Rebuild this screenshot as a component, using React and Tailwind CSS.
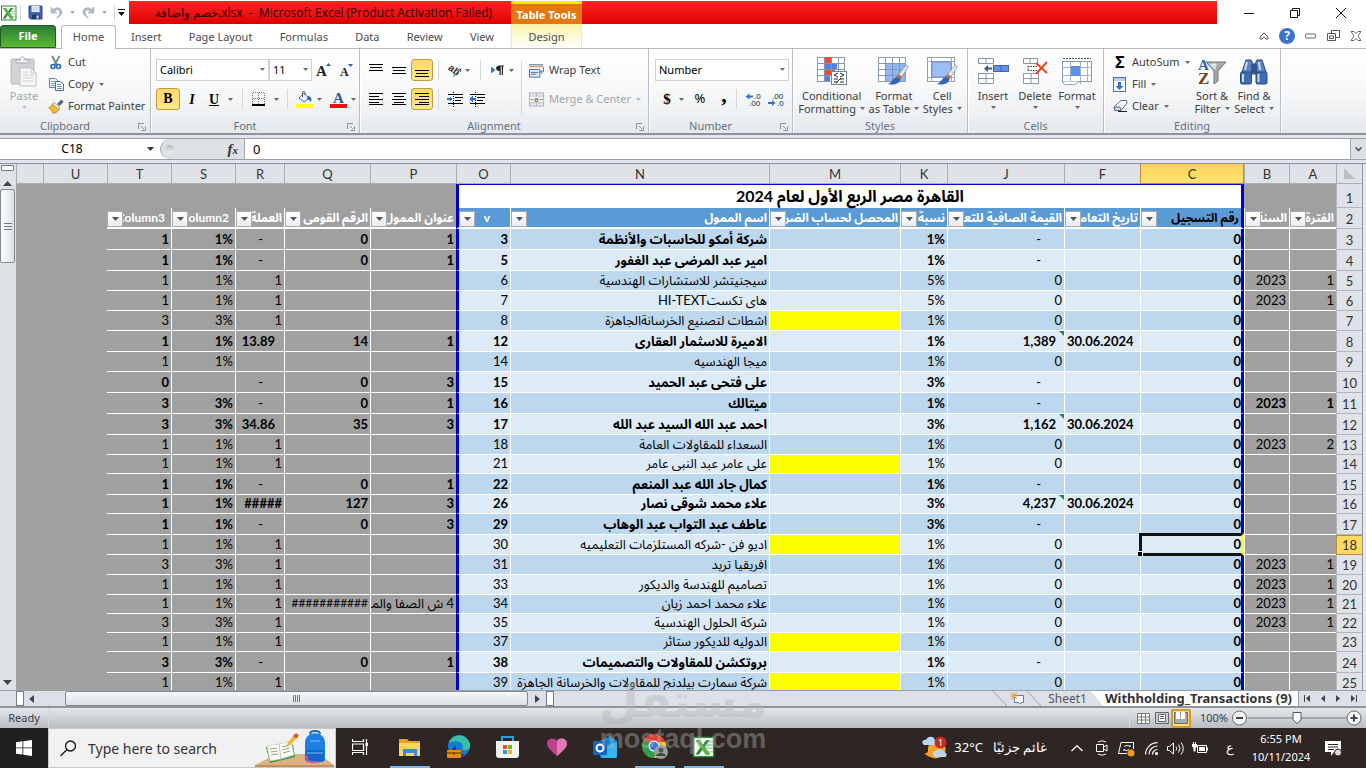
import { useState } from "react";
import clsx from "clsx";

const columns = [
  { id: "A", width: 47, title: "الفترة" },
  { id: "B", width: 45, title: "السنة" },
  { id: "C", width: 104, title: "رقم التسجيل" },
  { id: "F", width: 76, title: "تاريخ التعامل" },
  { id: "J", width: 117, title: "القيمة الصافية للتعامل" },
  { id: "K", width: 47, title: "نسبة" },
  { id: "M", width: 131, title: "المحصل لحساب الضريبة" },
  { id: "N", width: 259, title: "اسم الممول" },
  { id: "O", width: 54, title: "v" },
  { id: "P", width: 86, title: "عنوان الممول" },
  { id: "Q", width: 86, title: "الرقم القومى" },
  { id: "R", width: 49, title: "العملة" },
  { id: "S", width: 64, title: "Column2" },
  { id: "T", width: 64, title: "Column3" },
];

const rows = [
  { n: 3, h: 21, bold: true, C: "0", J: "-", K: "1%", N: "شركة أمكو للحاسبات والأنظمة", O: "3", P: "1", Q: "0", R: "-", S: "1%", T: "1" },
  { n: 4, h: 21, bold: true, C: "0", J: "-", K: "1%", N: "امير عبد المرضى عبد الغفور", O: "5", P: "1", Q: "0", R: "-", S: "1%", T: "1" },
  { n: 5, h: 20, A: "1", B: "2023", C: "0", J: "0", K: "5%", N: "سيجنيتشر للاستشارات الهندسية", O: "6", R: "1", S: "1%", T: "1" },
  { n: 6, h: 20, A: "1", B: "2023", C: "0", J: "0", K: "5%", N: "هاى تكستHI-TEXT", O: "7", R: "1", S: "1%", T: "1" },
  { n: 7, h: 20, due: true, C: "0", J: "0", K: "1%", N: "اشطات لتصنيع الخرسانةالجاهزة", O: "8", R: "1", S: "3%", T: "3" },
  { n: 8, h: 21, bold: true, C: "0", F: "30.06.2024", J: "1,389", K: "1%", N: "الاميرة للاسثمار العقارى", O: "12", P: "1", Q: "14", R: "13.89", S: "1%", T: "1" },
  { n: 9, h: 20, C: "0", J: "0", K: "1%", N: "ميجا الهندسيه", O: "14", S: "1%", T: "1" },
  { n: 10, h: 21, bold: true, C: "0", J: "-", K: "3%", N: "على فتحى عبد الحميد", O: "15", P: "3", Q: "0", R: "-", T: "0" },
  { n: 11, h: 21, bold: true, A: "1", B: "2023", C: "0", J: "-", K: "1%", N: "ميتالك", O: "16", P: "1", Q: "0", R: "-", S: "3%", T: "3" },
  { n: 12, h: 21, bold: true, C: "0", F: "30.06.2024", J: "1,162", K: "3%", N: "احمد عبد الله السيد عبد الله", O: "17", P: "3", Q: "35", R: "34.86", S: "3%", T: "3" },
  { n: 13, h: 20, A: "2", B: "2023", C: "0", J: "0", K: "1%", N: "السعداء للمقاولات العامة", O: "18", R: "1", S: "1%", T: "1" },
  { n: 14, h: 19, due: true, C: "0", J: "0", K: "1%", N: "على عامر عبد النبى عامر", O: "21", R: "1", S: "1%", T: "1" },
  { n: 15, h: 21, bold: true, C: "0", J: "-", K: "1%", N: "كمال جاد الله عبد المنعم", O: "22", P: "1", Q: "0", R: "-", S: "1%", T: "1" },
  { n: 16, h: 19, bold: true, C: "0", F: "30.06.2024", J: "4,237", K: "3%", N: "علاء محمد شوقى نصار", O: "26", P: "3", Q: "127", R: "#####", S: "1%", T: "1" },
  { n: 17, h: 21, bold: true, C: "0", J: "-", K: "3%", N: "عاطف عبد التواب عبد الوهاب", O: "29", P: "3", Q: "0", R: "-", S: "1%", T: "1" },
  { n: 18, h: 20, due: true, C: "0", J: "0", K: "1%", N: "اديو فن -شركه المستلزمات التعليميه", O: "30", R: "1", S: "1%", T: "1" },
  { n: 19, h: 20, A: "1", B: "2023", C: "0", J: "0", K: "1%", N: "افريقيا تريد", O: "31", R: "1", S: "3%", T: "3" },
  { n: 20, h: 20, A: "1", B: "2023", C: "0", J: "0", K: "1%", N: "تصاميم للهندسة والديكور", O: "33", R: "1", S: "1%", T: "1" },
  { n: 21, h: 19, A: "1", B: "2023", C: "0", J: "0", K: "1%", N: "علاء محمد احمد زيان", O: "34", P: "4 ش الصفا والمروة", Q: "###########", R: "1", S: "1%", T: "1" },
  { n: 22, h: 19, A: "1", B: "2023", C: "0", J: "0", K: "1%", N: "شركة الحلول الهندسية", O: "35", R: "1", S: "3%", T: "3" },
  { n: 23, h: 19, due: true, C: "0", J: "0", K: "1%", N: "الدوليه للديكور ستائر", O: "37", R: "1", S: "1%", T: "1" },
  { n: 24, h: 21, bold: true, C: "0", J: "-", K: "1%", N: "بروتكشن للمقاولات والتصميمات", O: "38", P: "1", Q: "0", R: "-", S: "3%", T: "3" },
  { n: 25, h: 20, due: true, C: "0", J: "0", K: "1%", N: "شركة سمارت بيلدنج للمقاولات والخرسانة الجاهزة", O: "39", R: "1", S: "1%", T: "1" },
];

const inPrintArea = (id) => "CFJKMNO".includes(id);

/* ---------- small pieces ---------- */

function Arrow({ className }) {
  return (
    <svg width="5" height="3" viewBox="0 0 5 3" className={clsx("shrink-0", className)}>
      <path d="M0 0h5L2.5 3z" fill="currentColor" />
    </svg>
  );
}

function Sep({ className }) {
  return <span className={clsx("w-px shrink-0 bg-[#d3d6da]", className)} />;
}

function Lines({ rows: spec, selected, label }) {
  return (
    <button
      aria-label={label}
      className={clsx(
        "flex h-[22px] w-[22px] items-center justify-center rounded-[3px] border",
        selected ? "border-[#c29b3b] bg-gradient-to-b from-[#fdd573] to-[#ffe78a]" : "border-transparent"
      )}
    >
      <svg width="14" height="16" viewBox="0 0 14 16" shapeRendering="crispEdges">
        {spec.map(([x, y, w]) => (
          <rect key={y} x={x} y={y} width={w} height="1" fill="#000" />
        ))}
      </svg>
    </button>
  );
}

function Group({ title, width, launcher, children }) {
  return (
    <section className={clsx("flex h-full shrink-0 flex-col border-r border-[#b9bec5] shadow-[1px_0_0_#fff]", width)}>
      <div className="flex h-[70px] px-1 pt-[2px]">{children}</div>
      <div className={clsx("relative text-center text-[11px] leading-[14px] text-[#66707e]", launcher && "pr-5")}>
        {title}
        {launcher && (
          <svg className="absolute right-1 top-1" width="8" height="8" viewBox="0 0 8 8" fill="none" stroke="#8a919b">
            <path d="M.5 6V.5H6M3 3l3 3M7.500 3.500v4h-4" />
          </svg>
        )}
      </div>
    </section>
  );
}

function SmallButton({ icon, children, arrow, disabled }) {
  return (
    <button className={clsx("flex h-[22px] items-center gap-1 whitespace-nowrap", disabled && "text-[#a3a6aa]")}>
      <span className="flex w-4 justify-center">{icon}</span>
      {children}
      {arrow && <Arrow className={clsx("ml-px", disabled ? "text-[#b5b8bc]" : "text-[#66696e]")} />}
    </button>
  );
}

function BigButton({ icon, lines, arrowBelow, disabled, width }) {
  return (
    <button
      className={clsx(
        "flex flex-col items-center whitespace-nowrap pt-[2px] leading-[13px]",
        width,
        disabled && "text-[#a3a6aa]"
      )}
    >
      <span className="flex h-9 items-center">{icon}</span>
      <span>{lines[0]}</span>
      {lines[1] && (
        <span className="flex items-center gap-1">
          {lines[1]}
          <Arrow className="text-[#66696e]" />
        </span>
      )}
      {arrowBelow && <Arrow className={clsx("mt-1", disabled ? "text-[#c0c3c7]" : "text-[#66696e]")} />}
    </button>
  );
}

function Combo({ label, value, width }) {
  return (
    <span className={clsx("relative flex h-[22px]", width)}>
      <select
        aria-label={label}
        defaultValue={value}
        className="w-full appearance-none border border-[#cdd1d6] bg-white px-[3px] text-[11px] text-black"
      >
        <option>{value}</option>
      </select>
      <Arrow className="pointer-events-none absolute right-1 top-[9px] text-[#66696e]" />
    </span>
  );
}

/* ---------- icons ---------- */

function ExcelIcon({ size = 16 }) {
  return (
    <svg width={size} height={size} viewBox="0 0 16 16">
      <rect x=".5" y="1" width="14.500" height="14" fill="#f4faf2" stroke="#2f8a3b" />
      <path d="M10 4h4.500M10 6.500h4.500M10 9h4.500M10 11.500h4.500" stroke="#9dcf9f" />
      <path d="M2 3h3l2 3.500L9.500 3H12L8.500 8l4 5.500H9.200L6.800 10l-2.300 3.500H1.800L5.500 8z" fill="#2f8a3b" />
      <path d="M2 3h3l7.500 10.500H9.200z" fill="#62b147" />
    </svg>
  );
}

function SaveIcon() {
  return (
    <svg width="15" height="15" viewBox="0 0 15 15">
      <path d="M1 1h13v13H2.500L1 12.500z" fill="#4163b8" stroke="#2c4890" />
      <rect x="3.500" y="1" width="8" height="6" fill="#eef4fc" />
      <path d="M4.500 3h6M4.500 5h6" stroke="#a7bfe4" />
      <rect x="4" y="9.500" width="7.500" height="4.500" fill="#22345e" />
      <rect x="8.500" y="10.500" width="2" height="3" fill="#dfe8f5" />
    </svg>
  );
}

function UndoIcon({ flip }) {
  return (
    <svg width="13" height="13" viewBox="0 0 13 13" className={flip && "-scale-x-100"}>
      <path d="M1 1v6h6L4.800 5C7 2.800 10 4 9.700 7c-.2 2-1.500 3.600-3.200 5.300C10 10.500 12 8.700 12 6 12 1.800 6.500.2 3.200 3.400z" fill="#b4b9c2" stroke="#9ba1ac" strokeWidth=".5" />
    </svg>
  );
}

function PasteIcon() {
  return (
    <svg width="28" height="31" viewBox="0 0 28 31">
      <rect x="1" y="3" width="23" height="25" rx="1.500" fill="#d1d3d6" stroke="#b4b6ba" />
      <path d="M6 7V4h4c0-4 5-4 5 0h4v3z" fill="#f0f1f2" stroke="#a7aaae" />
      <path d="M10 12h11l5 5v13H10z" fill="#f8f8f9" stroke="#bcbfc3" />
      <path d="M21 12v5h5M12.500 16h6M12.500 19h11M12.500 22h11M12.500 25h11" fill="none" stroke="#cbced2" />
    </svg>
  );
}

function CutIcon() {
  return (
    <svg width="12" height="15" viewBox="0 0 12 15" fill="none">
      <path d="M2 1l5 9M9.500 1L4.500 10" stroke="#6e7a8e" strokeWidth="1.600" />
      <circle cx="3" cy="11.500" r="2" stroke="#2c63b5" strokeWidth="1.600" />
      <circle cx="8.500" cy="11.500" r="2" stroke="#2c63b5" strokeWidth="1.600" />
    </svg>
  );
}

function CopyIcon() {
  return (
    <svg width="15" height="13" viewBox="0 0 15 13">
      <path d="M.5.5h6l2 2v7h-8z" fill="#eaf1fb" stroke="#5d83bb" />
      <path d="M2 3.500h4M2 5.500h5M2 7.500h4" stroke="#7fa3d8" />
      <path d="M6.500 3.500h5l3 2.500v6.500h-8z" fill="#fff" stroke="#3f6cae" />
      <path d="M8 6.500h4M8 8.500h5M8 10.500h5" stroke="#6c95d2" />
    </svg>
  );
}

function BrushIcon() {
  return (
    <svg width="16" height="15" viewBox="0 0 16 15">
      <path d="M9 5l4.500-4.500L15.500 3 11.500 7z" fill="#56627a" />
      <path d="M6 3.500L12 9l-1.500 1.500L4.500 5.500z" fill="#fff" stroke="#6b7280" strokeWidth=".7" />
      <path d="M4.500 5L11 10.500c-1 2-3 3.500-6 4C4 12 2.500 10 .5 8.500 2 8.200 3.500 7 4.500 5z" fill="#f2b63c" stroke="#b47a17" strokeWidth=".7" />
    </svg>
  );
}

function GrowFont({ small }) {
  return (
    <svg width="15" height="16" viewBox="0 0 15 16">
      <text x={small ? 1 : 0} y="14" fontSize={small ? 12 : 15} fontWeight="bold" fontFamily="Liberation Serif, serif" fill="#222">A</text>
      <path d={small ? "M9 2h5l-2.500 3z" : "M10 4h5l-2.500-3z"} fill="#2c5fae" />
    </svg>
  );
}

function BordersIcon() {
  return (
    <svg width="14" height="14" viewBox="0 0 14 14" shapeRendering="crispEdges">
      <path d="M.5.500h12M.5 6.500h12M.5.500v12M6.500.500v12M12.500.500v12" fill="none" stroke="#777" strokeDasharray="1 1" />
      <path d="M0 13h13" stroke="#000" strokeWidth="2" />
    </svg>
  );
}

function FillColor() {
  return (
    <svg width="17" height="17" viewBox="0 0 17 17">
      <path d="M3 7l5-5 5 5-5 4z" fill="#e7effa" stroke="#55719d" />
      <path d="M6.500 6V1.500c0-1.500 2.500-1.500 2.500 0V4" fill="none" stroke="#555" />
      <path d="M12 5c3 .5 4 3 3 6-1-1-2-2.500-4-3z" fill="#2e62b6" />
      <rect x="0" y="13" width="17" height="4" fill="#ff0" />
    </svg>
  );
}

function FontColor() {
  return (
    <svg width="17" height="17" viewBox="0 0 17 17">
      <text x="3" y="12" fontSize="15" fontWeight="bold" fontFamily="Liberation Serif, serif" fill="#31569c">A</text>
      <rect x="0" y="13" width="17" height="4" fill="#f00e0e" />
    </svg>
  );
}

function OrientIcon() {
  return (
    <svg width="16" height="16" viewBox="0 0 16 16">
      <text x="1" y="10" fontSize="10" fontWeight="bold" fontFamily="Liberation Sans, sans-serif" fill="#333" transform="rotate(38 5 8)">ab</text>
      <path d="M6 14.500L14 7M14 7l-3 .5M14 7l-.5 3" stroke="#555" fill="none" />
    </svg>
  );
}

function DirectionIcon() {
  return (
    <svg width="13" height="11" viewBox="0 0 13 11">
      <path d="M0 1.500l4.500 3.500L0 8.500z" fill="#3474cc" />
      <path d="M8.500 6C4 6 4 .5 8.500.500H13v1h-1V10h-1.200V1.500H9.700V10H8.500z" fill="#222" />
    </svg>
  );
}

function IndentIcon({ out }) {
  return (
    <svg width="17" height="15" viewBox="0 0 17 15" shapeRendering="crispEdges">
      <path d="M1 2.500h15M8 5.500h8M8 8.500h6M1 11.500h15" stroke="#000" />
      <path d="M6.500 0v15" stroke="#000" strokeDasharray="1 1" />
      <path d={out ? "M0 7l4-3v2h3v2H4v2z" : "M6 7L2.500 4v2H0v2h2.500v2z"} fill="#2a6bd0" />
    </svg>
  );
}

function WrapIcon() {
  return (
    <svg width="17" height="15" viewBox="0 0 17 15">
      <path d="M0 1.500h15" stroke="#3c5c8c" />
      <path d="M0 3.500h15" stroke="#c77b3b" />
      <rect x=".5" y="6.500" width="11" height="8" fill="#e8f0fb" stroke="#4a6796" />
      <path d="M2 9.500h8M2 11.500h6" stroke="#3b6ebd" />
      <path d="M15.500 4v5h-3m1.500-2l-2 2 2 2" fill="none" stroke="#3b6ebd" />
    </svg>
  );
}

function MergeIcon() {
  return (
    <svg width="17" height="15" viewBox="0 0 17 15">
      <rect x=".5" y=".5" width="15" height="14" fill="#e6e7e9" stroke="#aeb1b5" />
      <path d="M.5 4h15M.5 11h15M8 .5V4M8 11v3.500" stroke="#aeb1b5" />
      <rect x="1" y="4.500" width="14" height="6" fill="#f7f7f8" />
      <path d="M1.500 7.500H5M11 7.500h4" stroke="#888" />
      <text x="5.500" y="10" fontSize="8" fontWeight="bold" fontFamily="Liberation Sans, sans-serif" fill="#777">a</text>
    </svg>
  );
}

function DecimalIcon({ down }) {
  return (
    <svg width="17" height="15" viewBox="0 0 17 15" fontFamily="Liberation Sans, sans-serif" fontSize="8" fill="#222">
      <text x={down ? 4 : 9} y="7">{down ? ".00" : ".0"}</text>
      <text x={down ? 9 : 4} y="14">{down ? ".0" : ".00"}</text>
      <path d={down ? "M0 10h4V8l3.500 3L4 14v-2H0z" : "M8 3.500H4.500v-2L.5 4.500l4 3v-2H8z"} fill="#3470cc" />
    </svg>
  );
}

function GridBase({ fill }) {
  return (
    <>
      <rect x=".5" y=".5" width="27" height="24" fill="#fff" stroke="#8e9bb0" />
      {fill}
      <path d="M.5 6.500h27M.5 12.500h27M.5 18.500h27M7.500.500v24M14.500.500v24M21.500.500v24" stroke="#8496b8" />
    </>
  );
}

function PaintBrush() {
  return (
    <>
      <path d="M20 18L28 8l2.500 1.500L24 20z" fill="#e4e6ea" stroke="#81868e" strokeWidth=".7" />
      <path d="M18 20l3-3 3 3-2 3z" fill="#b57634" />
      <path d="M19 20c-5 1-4 5-9 7 5 1.500 12 0 12.500-5z" fill="#3567b8" />
    </>
  );
}

function ConditionalIcon() {
  return (
    <svg width="30" height="29" viewBox="0 0 30 29">
      <GridBase
        fill={
          <>
            <path d="M7 0h7v6H7zM7 12h11v6H7z" fill="#e2512b" />
            <path d="M7 6h13v6H7zM7 18h6v6H7z" fill="#4f80e4" />
          </>
        }
      />
      <rect x="14.500" y="14.500" width="15" height="13" fill="#fff" stroke="#70819d" />
      <path d="M21 16l-4 2 4 2M17 22h4M17 25h4M23 16l4 2-4 2M23 22h4M23 25h4M24 21l-5 5" fill="none" stroke="#222" />
    </svg>
  );
}

function FormatTableIcon() {
  return (
    <svg width="31" height="29" viewBox="0 0 31 29">
      <GridBase fill={<rect x="7" y="6" width="20" height="18" fill="#8fb6f2" />} />
      <PaintBrush />
    </svg>
  );
}

function CellStylesIcon() {
  return (
    <svg width="31" height="29" viewBox="0 0 31 29">
      <rect x=".5" y=".5" width="27" height="24" fill="#fff" stroke="#8e9bb0" />
      <path d="M.5 4.500h27M.5 20.500h27M4.500.500v24M24.500.500v24" stroke="#9aa9c4" />
      <rect x="5" y="5" width="19" height="15" fill="#9dbff5" stroke="#5c8ce0" />
      <PaintBrush />
    </svg>
  );
}

function InsertCells() {
  return (
    <svg width="31" height="28" viewBox="0 0 31 28">
      <path d="M.5 1.500h15v5h-15zM8 1.500v5M.5 16.500h15v10h-15zM8 16.500v10M.5 21.500h15" fill="#fff" stroke="#8b96a8" />
      <rect x="15.500" y="8.500" width="15" height="6" fill="#5f92e8" stroke="#3f66b0" />
      <path d="M23 9v6" stroke="#3f66b0" />
      <path d="M6 11.500l4-3.500v2.500h4v2h-4V15z" fill="#39588c" />
    </svg>
  );
}

function DeleteCells() {
  return (
    <svg width="26" height="28" viewBox="0 0 26 28">
      <path d="M1.500 1.500h14v5h-14zM8 1.500v5M1.500 16.500h15v10h-15zM9 16.500v10M1.500 21.500h15" fill="#fff" stroke="#8b96a8" />
      <path d="M6 9.500h9M6 13.500h9M6 9v5" stroke="#444" strokeDasharray="1.500 1" />
      <path d="M14 6l11 10M25 5L14 17" stroke="#e04a1c" strokeWidth="2" />
    </svg>
  );
}

function FormatCells() {
  return (
    <svg width="31" height="30" viewBox="0 0 31 30">
      <path d="M1 2.500h28" stroke="#555" strokeDasharray="2 1" />
      <rect x=".5" y="5.500" width="29" height="20" fill="#fff" stroke="#8b96a8" />
      <path d="M.5 11.500h29M.5 19.500h29M8.500 5.500v23M18.500 5.500v23M25.500 5.500v20" stroke="#9eb0cf" />
      <rect x="9" y="10" width="9" height="10" fill="#5c8fe8" />
      <path d="M1 25.500c0 4 4 3 7 3s6 1 8-3" fill="#fff" stroke="#8b96a8" />
    </svg>
  );
}

function FillIcon() {
  return (
    <svg width="14" height="15" viewBox="0 0 14 15">
      <rect x=".5" y=".5" width="12" height="14" fill="#fff" stroke="#4a72b0" />
      <rect x="1" y="1" width="11" height="3" fill="#b7cff0" />
      <path d="M5 5h3v4h2.500l-4 4-4-4H5z" fill="#2f6fd0" />
    </svg>
  );
}

function EraserIcon() {
  return (
    <svg width="15" height="12" viewBox="0 0 15 12">
      <path d="M1 7l7-6.500h5.500L14 3 8 10.500H2z" fill="#f4f6fa" stroke="#5a6a85" />
      <path d="M1 7h6l1 3.500H2z" fill="#cbd9ef" stroke="#5a6a85" />
      <path d="M5 11.500h9" stroke="#222" />
    </svg>
  );
}

function SortIcon() {
  return (
    <svg width="30" height="29" viewBox="0 0 30 29">
      <path d="M9 5h20l-8 9v10l-4 3V14z" fill="#a4a8ad" stroke="#73777d" />
      <path d="M12 6.500h8l-2 7z" fill="#dfe1e4" />
      <text x="1" y="13" fontSize="15" fontWeight="bold" fontFamily="Liberation Serif, serif" fill="#2f64b4">A</text>
      <text x="1" y="27" fontSize="17" fontWeight="bold" fontFamily="Liberation Serif, serif" fill="#7b3f1e">Z</text>
    </svg>
  );
}

function FindIcon() {
  return (
    <svg width="28" height="27" viewBox="0 0 28 27">
      <path d="M6 2h5l2 4h2l2-4h5l4 12v2H2v-2z" fill="#5a82bd" stroke="#29487e" />
      <path d="M11 6h6v9h-6z" fill="#33548c" />
      <rect x=".5" y="14" width="11" height="12" rx="1.500" fill="#3d6cb0" stroke="#29487e" />
      <rect x="16" y="14" width="11" height="12" rx="1.500" fill="#3d6cb0" stroke="#29487e" />
      <path d="M3 16v8M18.500 16v8M7 4L5 12M19 4l1 8" stroke="#c6dbf5" strokeWidth="2" />
    </svg>
  );
}

/* ---------- title bar and tabs ---------- */

function TitleBar() {
  return (
    <header className="flex h-6 shrink-0 bg-white pt-px">
      <div className="flex w-[129px] shrink-0 items-center gap-[7px] pl-px text-[#a3a8b0]">
        <ExcelIcon />
        <div className="-ml-1 flex items-center gap-[7px]">
          <Sep className="h-4" />
          <button aria-label="Save"><SaveIcon /></button>
          <button aria-label="Undo"><UndoIcon /></button>
          <Arrow />
          <button aria-label="Redo"><UndoIcon flip /></button>
          <Arrow />
          <Sep className="h-4 bg-[#8a8f96]" />
          <svg width="8" height="8" viewBox="0 0 8 8" className="-ml-1">
            <path d="M0 .5h7M1 3.500h5L3.500 6.500z" fill="#111" stroke="#111" />
          </svg>
        </div>
      </div>
      <div className="flex min-w-0 flex-1 bg-gradient-to-b from-[#ff2222] to-[#dd0000]">
        <h1 className="w-[382px] shrink-0 whitespace-pre pl-[26px] font-['Open_Sans','Noto_Sans',sans-serif] text-[12px] leading-6 text-[#2b0505]">
          <bdi>خصم واضافة</bdi>.xlsx&nbsp; -&nbsp; Microsoft Excel (Product Activation Failed)
        </h1>
        <div className="w-[71px] shrink-0 whitespace-nowrap border-t-[3px] border-[#fbe31d] bg-[#e2780f] text-center text-[11px] font-bold leading-[22px] text-white">
          Table Tools
        </div>
      </div>
      <div className="flex w-[149px] shrink-0 items-center justify-end gap-9 pr-5">
        <button aria-label="Minimize">
          <svg width="10" height="10" viewBox="0 0 10 10"><path d="M0 5.500h10" stroke="#111" /></svg>
        </button>
        <button aria-label="Restore">
          <svg width="10" height="10" viewBox="0 0 10 10" fill="none" stroke="#111"><path d="M.5 2.500h7v7h-7zM2.500 2.500v-2h7v7h-2" /></svg>
        </button>
        <button aria-label="Close">
          <svg width="10" height="10" viewBox="0 0 10 10" stroke="#111"><path d="M0 0l10 10M10 0L0 10" /></svg>
        </button>
      </div>
    </header>
  );
}

function TabRow() {
  const tabs = ["Insert", "Page Layout", "Formulas", "Data", "Review", "View"];
  return (
    <nav className="flex h-[25px] shrink-0 items-stretch border-b border-[#b6babf] bg-white text-[11px] text-[#4a4d52]">
      <button className="mt-px w-14 rounded-t-[3px] border border-[#1d5c2a] bg-gradient-to-b from-[#2b7d36] to-[#5cb82f] font-bold text-white">
        File
      </button>
      <button className="relative -mb-px ml-[5px] mt-px w-[55px] rounded-t-[3px] border border-b-0 border-[#b6babf] bg-white">
        Home
      </button>
      <div className="flex w-[395px] justify-between pl-[15px] pr-[17px] pt-[2px]">
        {tabs.map((t) => (
          <button key={t} className="whitespace-nowrap">{t}</button>
        ))}
      </div>
      <button className="w-[71px] border-x border-[#f2e9b8] bg-gradient-to-b from-[#fcf3a8] to-white pt-[2px]">Design</button>
      <div className="ml-auto flex items-center gap-[10px] pr-1">
        <svg width="10" height="8" viewBox="0 0 10 8" fill="none" stroke="#555"><path d="M5 1l4 4v2H7L5 5 3 7H1V5z" /></svg>
        <button aria-label="Help" className="flex h-4 w-4 items-center justify-center rounded-full bg-[#3c74cc] text-[12px] font-bold text-white">
          ?
        </button>
        <svg width="12" height="6" viewBox="0 0 12 6"><rect x=".5" y="1" width="10" height="4" rx="1" fill="none" stroke="#666" /></svg>
        <svg width="13" height="12" viewBox="0 0 13 12" fill="none" stroke="#555"><path d="M4.500 3V.5h8v7H9M.5 3.500h8v7h-8zM2.500 6h4v2.500h-4z" /></svg>
        <svg width="12" height="10" viewBox="0 0 12 10" fill="none" stroke="#666"><path d="M1 .5h3l2 2 2-2h3L8 5l3 4.500H8l-2-2-2 2H1L4 5z" /></svg>
      </div>
    </nav>
  );
}

/* ---------- ribbon ---------- */

function Ribbon() {
  return (
    <div className="flex h-[86px] shrink-0 overflow-hidden border-b-2 border-[#8e949c] bg-gradient-to-b from-white via-[#f7f8f9] to-[#e6e9ed] text-[11px] text-[#3b3e43]">
      <Group title="Clipboard" width="w-[151px]" launcher>
        <div className="-ml-1 flex">
          <BigButton icon={<PasteIcon />} lines={["Paste"]} arrowBelow disabled width="w-12" />
          <div className="flex flex-col">
            <SmallButton icon={<CutIcon />}>Cut</SmallButton>
            <SmallButton icon={<CopyIcon />} arrow>Copy</SmallButton>
            <SmallButton icon={<BrushIcon />}>Format Painter</SmallButton>
          </div>
        </div>
      </Group>

      <Group title="Font" width="w-[209px]" launcher>
        <div className="flex flex-col gap-[7px] pl-px pt-2">
          <div className="flex items-center">
            <Combo label="Font" value="Calibri" width="w-[113px]" />
            <Combo label="Font size" value="11" width="w-[43px]" />
            <button className="ml-1" aria-label="Increase font size"><GrowFont /></button>
            <button className="ml-2" aria-label="Decrease font size"><GrowFont small /></button>
          </div>
          <div className="flex h-[22px] items-center text-black">
            <button className="h-[22px] w-6 rounded-[3px] border border-[#c29b3b] bg-gradient-to-b from-[#fdd573] to-[#ffe78a] font-['Liberation_Serif'] text-[14px] font-bold leading-5">B</button>
            <button className="w-6 font-['Liberation_Serif'] text-[14px] font-bold italic">I</button>
            <button className="w-5 font-['Liberation_Serif'] text-[14px] font-bold underline">U</button>
            <Arrow className="ml-1 text-[#66696e]" />
            <Sep className="mx-[9px] h-5" />
            <BordersIcon />
            <Arrow className="ml-2 text-[#66696e]" />
            <Sep className="mx-2 h-5" />
            <FillColor />
            <Arrow className="mx-1 text-[#66696e]" />
            <span className="ml-1"><FontColor /></span>
            <Arrow className="ml-1 text-[#66696e]" />
          </div>
        </div>
      </Group>

      <Group title="Alignment" width="w-[289px]" launcher>
        <div className="flex flex-col gap-[7px] pl-px pt-2">
          <div className="flex h-[22px] items-center gap-px">
            <Lines label="Top align" rows={[[0, 2, 14], [1, 5, 12], [0, 8, 14]]} />
            <Lines label="Middle align" rows={[[0, 5, 14], [1, 8, 12], [0, 11, 14]]} />
            <Lines label="Bottom align" rows={[[0, 8, 14], [1, 11, 12], [0, 14, 14]]} selected />
            <Sep className="ml-1 mr-[7px] h-5" />
            <OrientIcon />
            <Arrow className="ml-px text-[#66696e]" />
            <Sep className="mx-[9px] h-5" />
            <DirectionIcon />
            <Arrow className="ml-1 text-[#66696e]" />
          </div>
          <div className="flex h-[22px] items-center gap-px">
            <Lines label="Align left" rows={[[0, 2, 14], [0, 5, 10], [0, 8, 14], [0, 11, 10], [0, 13, 14]]} />
            <Lines label="Center" rows={[[0, 2, 14], [2, 5, 10], [0, 8, 14], [2, 11, 10], [0, 13, 14]]} />
            <Lines label="Align right" rows={[[0, 2, 14], [4, 5, 10], [0, 8, 14], [4, 11, 10], [0, 13, 14]]} selected />
            <Sep className="ml-1 mr-[7px] h-5" />
            <IndentIcon />
            <span className="ml-1"><IndentIcon out /></span>
          </div>
        </div>
        <Sep className="ml-auto mt-[10px] h-[54px]" />
        <div className="flex w-[122px] shrink-0 flex-col gap-[7px] pl-[7px] pt-2">
          <SmallButton icon={<WrapIcon />}>Wrap Text</SmallButton>
          <SmallButton icon={<MergeIcon />} arrow disabled>Merge &amp; Center</SmallButton>
        </div>
      </Group>

      <Group title="Number" width="w-[144px]" launcher>
        <div className="flex shrink-0 flex-col gap-[7px] pl-[2px] pt-2">
          <Combo label="Number format" value="Number" width="w-[134px]" />
          <div className="flex h-[22px] items-center text-black">
            <button className="w-6 font-['Liberation_Serif'] text-[15px] font-bold">$</button>
            <Arrow className="text-[#66696e]" />
            <button className="ml-1 w-6 text-[13px]">%</button>
            <button className="w-6 pb-2 font-['Liberation_Serif'] text-[22px] font-bold leading-3">,</button>
            <Sep className="mr-2 h-5" />
            <DecimalIcon />
            <span className="ml-[6px]"><DecimalIcon down /></span>
          </div>
        </div>
      </Group>

      <Group title="Styles" width="w-[175px]">
        <BigButton icon={<ConditionalIcon />} lines={["Conditional", "Formatting"]} width="w-[70px]" />
        <BigButton icon={<FormatTableIcon />} lines={["Format", "as Table"]} width="w-14" />
        <BigButton icon={<CellStylesIcon />} lines={["Cell", "Styles"]} width="w-[42px]" />
      </Group>

      <Group title="Cells" width="w-[136px]">
        <BigButton icon={<InsertCells />} lines={["Insert"]} arrowBelow width="w-[42px]" />
        <BigButton icon={<DeleteCells />} lines={["Delete"]} arrowBelow width="w-[42px]" />
        <BigButton icon={<FormatCells />} lines={["Format"]} arrowBelow width="w-[42px]" />
      </Group>

      <Group title="Editing" width="w-[177px]">
        <div className="flex w-[83px] flex-col pl-1">
          <SmallButton icon={<span className="text-[16px] font-bold text-black">Σ</span>} arrow>AutoSum</SmallButton>
          <SmallButton icon={<FillIcon />} arrow>Fill</SmallButton>
          <SmallButton icon={<EraserIcon />} arrow>Clear</SmallButton>
        </div>
        <BigButton icon={<SortIcon />} lines={["Sort &", "Filter"]} width="w-[42px]" />
        <BigButton icon={<FindIcon />} lines={["Find &", "Select"]} width="w-[42px]" />
      </Group>
    </div>
  );
}

function FormulaBar() {
  const [value, setValue] = useState("0");
  return (
    <div className="shrink-0 border-b border-[#8f949c] bg-[#e2e3ec] pb-[3px] pt-[3px]">
      <div className="flex h-[22px] border-y border-[#9b9fa6] bg-white">
        <div className="relative flex w-40">
          <input
            aria-label="Name box"
            defaultValue="C18"
            className="w-full bg-transparent pr-4 text-center text-[12px] leading-5 text-black outline-none"
          />
          <svg width="7" height="4" viewBox="0 0 7 4" className="absolute right-[6px] top-2">
            <path d="M0 0h7L3.500 4z" fill="#333" />
          </svg>
        </div>
        <div className="flex w-[85px] items-center justify-between rounded-l-full border-r border-l border-[#a2a6ad] bg-[#dde0e5] pl-[5px] pr-[6px]">
          <span className="h-2 w-2 rounded-full bg-gradient-to-b from-[#b3b7bd] to-[#f2f3f5]" />
          <span className="font-['Liberation_Serif'] text-[15px] font-bold italic text-[#333]">
            f<span className="text-[11px]">x</span>
          </span>
        </div>
        <input
          aria-label="Formula"
          value={value}
          onChange={(e) => setValue(e.target.value)}
          className="min-w-0 flex-1 px-2 text-[13px] leading-5 text-black outline-none"
        />
        <button aria-label="Expand formula bar" className="flex w-4 items-center justify-center border-l border-[#a2a6ad] bg-[#dde0e5]">
          <svg width="7" height="5" viewBox="0 0 7 5" fill="none" stroke="#444" strokeWidth="1.500"><path d="M.5.5l3 3 3-3" /></svg>
        </button>
      </div>
    </div>
  );
}

/* ---------- worksheet ---------- */

function FilterButton({ title }) {
  return (
    <button
      aria-label={`Filter ${title}`}
      className="flex h-4 w-4 shrink-0 items-center justify-center border border-[#a5abb3] bg-gradient-to-b from-white to-[#e9ecf0]"
    >
      <svg width="7" height="4" viewBox="0 0 7 4"><path d="M0 0h7L3.500 4z" fill="#555" /></svg>
    </button>
  );
}

function Cell({ row, id }) {
  const value = row[id];
  const printed = inPrintArea(id);
  const active = id === "C" && row.n === 18;
  const dash = value === "-";
  return (
    <td
      className={clsx(
        "relative border-b border-b-white p-0 align-bottom",
        id !== "T" && id !== "O" && "border-l border-l-white",
        id === "O" && "border-l-[3px] border-l-[#0000cc]",
        id === "C" && "border-r-[3px] border-r-[#0000cc]",
        (row.bold || id === "C") && !dash && "font-bold",
        !printed && "bg-[#a0a0a0]",
        printed && id === "M" && row.due && "bg-[#ffff00]",
        printed && !(id === "M" && row.due) && (row.n % 2 ? "bg-[#bdd7ee]" : "bg-[#ddebf7]")
      )}
    >
      <div
        className={clsx(
          "overflow-hidden whitespace-nowrap pb-[2px] leading-[16px]",
          id === "F" ? "px-[2px] text-left" : "text-right",
          "AKNOPQST".includes(id) && "pr-[2px]",
          id === "Q" && row.n === 21 && "text-[12px]",
          id === "B" && "pr-[3px]",
          id === "J" && (dash ? "pr-[23px]" : row.bold ? "pr-2" : "pr-[2px]"),
          id === "R" && (dash ? "pr-[21px]" : value && value.includes(".") ? "pr-[9px]" : "pr-[2px]")
        )}
      >
        {value}
      </div>
      {id === "J" && row.F && (
        <svg className="absolute right-0 top-0" width="5" height="5" viewBox="0 0 5 5"><path d="M0 0h5v5z" fill="#1f8a3a" /></svg>
      )}
      {active && (
        <>
          <span className="pointer-events-none absolute -bottom-[2px] -left-[2px] -right-[3px] -top-[2px] z-10 border-[3px] border-[#15110c] border-r-[#ffff00]" />
          <span className="absolute -bottom-[2px] -left-[3px] z-20 h-[5px] w-[5px] border-r border-t border-white bg-black" />
        </>
      )}
    </td>
  );
}

function RowHeader({ n, active }) {
  return (
    <th
      scope="row"
      className={clsx(
        "border-b border-l p-0 text-center align-bottom font-normal leading-[17px] text-[#333]",
        active ? "border-t border-[#c08a3c] bg-[#ffd960]" : "border-[#b0b4bc] bg-[#dfe3e8]"
      )}
    >
      {n}
    </th>
  );
}

function Sheet() {
  return (
    <main className="flex min-h-0 flex-1 overflow-hidden bg-[#a0a0a0]">
      <div className="flex w-4 shrink-0 flex-col border-r border-[#dfe3e8] bg-[#dfe3e8]">
        <div className="mx-px mt-px h-[6px] rounded-[1px] border border-[#777b82] bg-white" />
        <div className="flex h-4 items-center justify-center pt-2">
          <svg width="9" height="5" viewBox="0 0 9 5"><path d="M0 5h9L4.500 0z" fill="#444" /></svg>
        </div>
        <div className="mt-[2px] flex h-[74px] flex-col items-center justify-center gap-[2px] rounded-[2px] border border-[#84898f] bg-gradient-to-r from-white to-[#dde1e7]">
          <span className="h-px w-2 bg-[#777]" />
          <span className="h-px w-2 bg-[#777]" />
          <span className="h-px w-2 bg-[#777]" />
        </div>
        <div className="mt-auto flex h-4 items-center justify-center">
          <svg width="9" height="5" viewBox="0 0 9 5"><path d="M0 0h9L4.500 5z" fill="#444" /></svg>
        </div>
      </div>

      <div className="min-w-0 flex-1 overflow-hidden">
        <table dir="rtl" className="w-full table-fixed border-separate border-spacing-0 font-['Lato','Noto_Sans_Arabic','DejaVu_Sans',sans-serif] text-[13px] text-black">
          <colgroup>
            <col className="w-[26px]" />
            {columns.map((c) => (
              <col key={c.id} style={{ width: c.width }} />
            ))}
            <col className="w-16" />
            <col />
          </colgroup>
          <thead>
            <tr className="h-5 bg-[#dfe3e8] text-[13px] text-[#333]">
              <th aria-label="Select all" className="border-b border-l border-[#a9adb5] p-0">
                <svg width="12" height="11" viewBox="0 0 12 11" className="mx-auto"><path d="M0 0v11h11z" fill="#b9bec6" /></svg>
              </th>
              {columns.map((c) => (
                <th
                  key={c.id}
                  scope="col"
                  className={clsx(
                    "border-b border-l p-0 pt-[2px] text-center font-normal leading-[17px]",
                    c.id === "C"
                      ? "border-r border-[#c08a3c] bg-gradient-to-b from-[#fdd15a] to-[#ffe56f]"
                      : "border-[#a9adb5]"
                  )}
                >
                  {c.id}
                </th>
              ))}
              <th scope="col" className="border-b border-l border-[#a9adb5] p-0 pt-[2px] font-normal leading-[17px]">U</th>
              <th className="border-b border-l border-[#a9adb5] p-0" />
            </tr>
          </thead>
          <tbody>
            <tr className="h-6">
              <RowHeader n={1} />
              <td colSpan={2} />
              <td colSpan={7} className="border-x-[3px] border-t border-[#0000cc] bg-white p-0 pb-px text-center align-middle text-[16px] font-bold leading-[20px]">
                القاهرة مصر الربع الأول لعام 2024
              </td>
            </tr>
            <tr className="h-[21px] text-white">
              <RowHeader n={2} />
              {columns.map((c) => (
                <td
                  key={c.id}
                  className={clsx(
                    "border-b-2 border-b-white p-0 align-bottom font-bold",
                    inPrintArea(c.id) ? "bg-[#5b9bd5]" : "bg-[#a0a0a0]",
                    c.id !== "T" && c.id !== "O" && "border-l border-l-white",
                    c.id === "O" && "border-l-[3px] border-l-[#0000cc]",
                    c.id === "C" && "border-r-[3px] border-r-[#0000cc] text-black"
                  )}
                >
                  <div className="flex items-end">
                    <div
                      className={clsx(
                        "min-w-0 flex-1 overflow-hidden whitespace-nowrap pb-px text-right text-[12px] leading-[17px]",
                        c.id === "O" ? "pr-5" : c.id === "S" || c.id === "T" ? "pr-[6px]" : "pr-[2px]"
                      )}
                    >
                      {c.title}
                    </div>
                    <FilterButton title={c.title} />
                  </div>
                </td>
              ))}
            </tr>
            {rows.map((row) => (
              <tr key={row.n} style={{ height: row.h }}>
                <RowHeader n={row.n} active={row.n === 18} />
                {columns.map((c) => (
                  <Cell key={c.id} row={row} id={c.id} />
                ))}
              </tr>
            ))}
          </tbody>
        </table>
      </div>
      <div className="w-1 shrink-0 border-l border-[#8f949c] bg-[#e8eaf2]" />
    </main>
  );
}

function SheetTabs() {
  return (
    <div className="flex h-4 shrink-0 border-t border-[#9b9fa6] bg-[#dde0e8] text-[12px] leading-[15px]">
      <span className="ml-4 w-2 border border-[#777b82] bg-white" />
      <button aria-label="Scroll left" className="flex w-[14px] items-center justify-center">
        <svg width="5" height="8" viewBox="0 0 5 8"><path d="M5 0v8L0 4z" fill="#444" /></svg>
      </button>
      <div className="flex w-[490px]">
        <div className="ml-[27px] flex flex-1 items-center justify-center gap-px rounded-[2px] border border-[#84898f] bg-gradient-to-b from-[#f6f8fa] to-[#dde1e7]">
          <span className="h-[7px] w-px bg-[#777]" />
          <span className="h-[7px] w-px bg-[#777]" />
          <span className="h-[7px] w-px bg-[#777]" />
          <span className="h-[7px] w-px bg-[#777]" />
        </div>
      </div>
      <button aria-label="Scroll right" className="flex w-[18px] items-center justify-center">
        <svg width="5" height="8" viewBox="0 0 5 8"><path d="M0 0v8l5-4z" fill="#444" /></svg>
      </button>
      <span className="w-2 border border-[#777b82] bg-white" />
      <div className="ml-auto flex">
        <button aria-label="Insert worksheet" className="relative flex w-[38px] items-center justify-end pr-[6px]">
          <svg width="16" height="15" viewBox="0 0 16 15" className="absolute left-0 top-0"><path d="M0 0l14 15" stroke="#9b9fa6" /></svg>
          <svg width="15" height="13" viewBox="0 0 15 13">
            <path d="M4.500 3.500h9v7h-2l-2 1.500-1-1.500h-4z" fill="#fff" stroke="#5279b8" />
            <path d="M4 0v8M0 4h8M1 1l6 6M7 1L1 7" stroke="#ef9b23" />
          </svg>
        </button>
        <button className="relative w-[60px] pr-1 text-right text-[#555]">
          <svg width="16" height="15" viewBox="0 0 16 15" className="absolute -left-1 top-0"><path d="M0 0l14 15" stroke="#9b9fa6" /></svg>
          Sheet1
        </button>
        <button className="whitespace-nowrap bg-white pl-[14px] pr-[6px] text-[13px] font-bold text-[#333] [clip-path:polygon(0_0,100%_0,100%_100%,12px_100%)]">
          Withholding_Transactions (9)
        </button>
      </div>
      <div className="mr-1 flex w-16 items-center justify-around border-l border-[#9b9fa6] text-[#444]">
        <svg width="6" height="7" viewBox="0 0 6 7"><path d="M0 0h1v7H0zM6 0v7L2 3.500z" fill="currentColor" /></svg>
        <svg width="4" height="7" viewBox="0 0 4 7"><path d="M4 0v7L0 3.500z" fill="currentColor" /></svg>
        <svg width="4" height="7" viewBox="0 0 4 7"><path d="M0 0v7l4-3.500z" fill="currentColor" /></svg>
        <svg width="6" height="7" viewBox="0 0 6 7"><path d="M5 0h1v7H5zM0 0v7l4-3.500z" fill="currentColor" /></svg>
      </div>
    </div>
  );
}

function StatusBar() {
  return (
    <footer className="flex h-[22px] shrink-0 items-center border-t-2 border-[#8f949c] bg-gradient-to-b from-[#e4e7ea] to-[#b9bdc3] text-[11px] text-[#3b3e43]">
      <span className="w-12 text-center">Ready</span>
      <Sep className="h-5 bg-[#8f949c]" />
      <Sep className="ml-auto h-5 bg-[#8f949c]" />
      <svg width="13" height="11" viewBox="0 0 13 11" className="ml-[7px]"><path d="M.5.5h12v10H.5zM.5 4h12M.5 7h12M4.500.500v10M8.500.500v10" fill="#fff" stroke="#777" /></svg>
      <svg width="14" height="12" viewBox="0 0 14 12" className="ml-[5px]"><path d="M.5.5h13v11H.5z" fill="#c9ccd0" stroke="#666" /><path d="M3.500 2.500h7v7h-7zM5 4.500h4M5 6.500h4" fill="#fff" stroke="#666" /></svg>
      <span className="ml-[2px] flex h-[19px] w-5 items-center justify-center rounded-[2px] border-2 border-[#d39a2b] bg-[#ffe27a]">
        <svg width="14" height="12" viewBox="0 0 14 12"><path d="M.5.5h13v11H.5z" fill="#a9abaf" stroke="#666" /><path d="M2 0h4v7H2zM7 0h4v7H7z" fill="#fff" /></svg>
      </span>
      <span className="ml-[9px]">100%</span>
      <svg width="130" height="18" viewBox="0 0 130 18" className="ml-1 mr-1">
        <path d="M16 9h100" stroke="#7c8188" />
        <circle cx="7.500" cy="9" r="7" fill="#f6f7f8" stroke="#666" />
        <path d="M4 9h7" stroke="#444" strokeWidth="2" />
        <path d="M61 3.500h8v7.500l-4 3.500-4-3.500z" fill="#fff" stroke="#555" />
        <circle cx="122" cy="9" r="7" fill="#f6f7f8" stroke="#666" />
        <path d="M118.500 9h7M122 5.500v7" stroke="#444" strokeWidth="2" />
      </svg>
    </footer>
  );
}

/* ---------- taskbar ---------- */

function TaskButton({ label, running, children }) {
  return (
    <button aria-label={label} className="flex h-full w-[49px] items-center justify-center">
      <span className={clsx("flex h-full w-10 items-center justify-center border-b-2", running ? "border-[#76b9ed]" : "border-transparent")}>
        {children}
      </span>
    </button>
  );
}

function Taskbar() {
  return (
    <div className="flex h-10 shrink-0 items-stretch bg-[#2e2624] font-['Noto_Sans','Open_Sans',sans-serif] text-[11px] text-white">
      <button aria-label="Start" className="flex w-12 shrink-0 items-center justify-center bg-[#211f1e]">
        <svg width="16" height="16" viewBox="0 0 16 16" fill="#fff"><path d="M0 2.200l6.500-.9v6.200H0zM7.300 1.200L16 0v7.500H7.300zM0 8.300h6.500v6.300L0 13.700zM7.300 8.300H16V16l-8.700-1.200z" /></svg>
      </button>
      <label className="relative flex w-72 shrink-0 items-center border border-[#c8c8c8] bg-[#f1f1f1] pl-[11px]">
        <svg width="17" height="17" viewBox="0 0 17 17" fill="none" stroke="#111" strokeWidth="1.300"><circle cx="10.500" cy="6" r="5" /><path d="M7 9.500L.5 16" /></svg>
        <input aria-label="Search" placeholder="Type here to search" className="ml-[11px] w-40 bg-transparent text-[14px] outline-none placeholder:text-[#333]" />
        <svg width="80" height="38" viewBox="0 0 80 38" className="absolute bottom-0 right-0">
          <path d="M0 36L22 25h42l15 11v2H0z" fill="#dcb083" />
          <path d="M0 36h79v2H0z" fill="#c58f5d" />
          <path d="M11 18l13-3 14 1 2 12-25 6z" fill="#3f9a44" />
          <path d="M12 17l12-2 2 15-11 2zM24 15l12-3 3 14-13 4z" fill="#fbfbf7" stroke="#b8bfae" strokeWidth=".6" />
          <path d="M15 20l7-1M15.500 23l7-1M16 26l7-1M27 18l7-2M27.500 21l7-2M28 24l7-2" stroke="#8fa08b" />
          <path d="M31 18l2-5 6-7 3 2.500-6 7z" fill="#f2b53a" />
          <path d="M38 7l3-3 3 2.500-2.500 3z" fill="#d9532c" />
          <path d="M55 5c0-4 10-4 10 0" fill="none" stroke="#1668c9" strokeWidth="2" />
          <path d="M50 14c0-13 20-13 20 0v17c0 3-20 3-20 0z" fill="#1c7fe6" />
          <path d="M51 21h18v11c-5 2-13 2-18 0z" fill="#1466ca" />
          <path d="M55 12h10M52 24h16" stroke="#7cc0ff" />
          <path d="M52 27v5c5 2 8 1 11 1" fill="none" stroke="#c05ba8" strokeWidth="2" />
        </svg>
      </label>
      <TaskButton label="Task view">
        <svg width="17" height="16" viewBox="0 0 17 16" fill="none" stroke="#fff" strokeWidth="1.200"><path d="M.5 0v2.500h11V0M.5 5h11v6.500H.5zM.5 16v-2.500h11V16M14.500 0v16" /><rect x="13.500" y="4" width="2.500" height="3" fill="#fff" stroke="none" /></svg>
      </TaskButton>
      <TaskButton label="File Explorer" running>
        <svg width="22" height="19" viewBox="0 0 22 19"><path d="M0 1h8l2 2h11v15H0z" fill="#e9a01c" /><path d="M0 5h21v13H0z" fill="#fdd367" /><path d="M4 11h14v7h-3v-3H7v3H4z" fill="#3a8bdc" /></svg>
      </TaskButton>
      <TaskButton label="Edge">
        <svg width="24" height="24" viewBox="0 0 24 24"><circle cx="12" cy="11" r="11" fill="#1b78cf" /><path d="M2 8C5-1 19-3 23 9c1 4-2 7-6 6-3-1 0-3-2-6-3-4-9-3-13-1z" fill="#39c0a6" /><path d="M9 11c-1 5 3 9 9 8-4 4-12 3-13-3 0-3 2-5 4-5z" fill="#123f78" /><rect y="15" width="14" height="8" rx="1" fill="#e88d1a" /><path d="M0 18h14M7 17v3" stroke="#8a4b07" strokeWidth="1.500" /></svg>
      </TaskButton>
      <TaskButton label="Store">
        <svg width="24" height="23" viewBox="0 0 24 23"><path d="M6 6V1h11v5" fill="none" stroke="#2aa0dc" strokeWidth="2" /><path d="M0 5h23v14q0 3-3 3H3q-3 0-3-3z" fill="#f3f3f3" /><path d="M7 9h4v4H7z" fill="#e5502d" /><path d="M12 9h4v4h-4z" fill="#79b52c" /><path d="M7 14h4v4H7z" fill="#2b9be0" /><path d="M12 14h4v4h-4z" fill="#f3b421" /></svg>
      </TaskButton>
      <TaskButton label="Heart">
        <svg width="20" height="19" viewBox="0 0 20 19"><path d="M10 18C3 12 0 9 0 5.500 0 0 8-1 10 3c2-4 10-3 10 2.500C20 9 17 12 10 18z" fill="#c23f8c" /><path d="M10 3v15c7-6 10-9 10-12.500C20 0 12-1 10 3z" fill="#e07ab8" /></svg>
      </TaskButton>
      <TaskButton label="Outlook">
        <svg width="25" height="22" viewBox="0 0 25 22"><path d="M7 5l10-5 7 5v15q0 2-2 2H9q-2 0-2-2z" fill="#1b86d8" /><path d="M7 12l17-6v14q0 2-2 2H9z" fill="#38b5ee" /><rect y="5" width="14" height="14" rx="1" fill="#0f62bd" /><circle cx="7" cy="12" r="3.500" fill="none" stroke="#fff" strokeWidth="2" /></svg>
      </TaskButton>
      <TaskButton label="Chrome" running>
        <svg width="26" height="26" viewBox="0 0 26 26"><circle cx="12" cy="12" r="12" fill="#e33e2b" /><path d="M12 12L1.600 6A12 12 0 0 0 12 24l5-9z" fill="#2da04c" /><path d="M12 24l5-9 0-7h6.300A12 12 0 0 1 12 24z" fill="#fbc41b" /><circle cx="12" cy="12" r="5.500" fill="#fff" /><circle cx="12" cy="12" r="4.300" fill="#3477e0" /><circle cx="19" cy="18" r="7" fill="#9a9c9d" /><circle cx="19" cy="16" r="2.500" fill="#555" /><path d="M14 22c1-4 9-4 10 0" fill="#444" /></svg>
      </TaskButton>
      <TaskButton label="Excel" running>
        <ExcelIcon size={22} />
      </TaskButton>

      <div className="ml-auto flex items-center">
        <svg width="25" height="24" viewBox="0 0 25 24"><path d="M6 14c-1-8 10-12 17-4 3 8-6 14-12 12-4-1-7-3-9-5 3 1 4-1 4-3z" fill="#f5a12a" /><path d="M2 9c-4-3 0-6 2-5 2-5 9-4 9 1 4 0 4 4 0 4zM12 20c-3-3 0-5 2-5 2-3 8-2 8 1 4 1 3 5 0 5H13z" fill="#b9d6f6" /><circle cx="18.500" cy="6.500" r="6" fill="#c72c20" /><text x="16" y="10" fontSize="9" fill="#fff" fontFamily="Noto Sans, sans-serif">1</text></svg>
        <span className="ml-[7px] text-[13px]">32°C</span>
        <span dir="rtl" className="ml-2 w-[56px] whitespace-nowrap text-[13px]">غائم جزئيًا</span>
        <svg width="12" height="7" viewBox="0 0 12 7" fill="none" stroke="#fff" strokeWidth="1.300" className="ml-6"><path d="M.5 6L6 .8 11.500 6" /></svg>
        <svg width="12" height="16" viewBox="0 0 12 16" fill="none" stroke="#fff" className="ml-[13px]"><path d="M.5 4.500h7v7h-7zM7.500 7l3.500-2v6L7.500 9M2 2q4-2.500 8 0M2 14q4 2.500 8 0" /></svg>
        <svg width="17" height="17" viewBox="0 0 17 17" fill="none" stroke="#fff" className="ml-[10px]"><path d="M3 2.500L.5 13.500H9M3 2.500h12.500V9M6 7c1-2 5-2 6 0V5M11 9c-1 2-4 2-5 0v2" /><circle cx="13" cy="13" r="3.500" fill="#f59b1c" stroke="none" /></svg>
        <svg width="13" height="13" viewBox="0 0 13 13" fill="none" stroke="#fff" strokeWidth="1.200" className="ml-[10px]"><path d="M.5 12.500A12 12 0 0 1 12.500.700M4 12.500A8.500 8.500 0 0 1 12.500 4M7.500 12.500a5 5 0 0 1 5-5" /><circle cx="11.500" cy="11.500" r="1" fill="#fff" /></svg>
        <svg width="17" height="13" viewBox="0 0 17 13" fill="none" stroke="#fff" className="ml-[9px]"><path d="M.5 4.500h2L6.500 1v11L2.500 8.500h-2zM9 4.500q1.500 2 0 4M11.500 2.500q3 4 0 8M14 .5q4.500 6 0 12" /></svg>
        <svg width="16" height="12" viewBox="0 0 16 12" className="ml-2"><path d="M5.500 3.500h9v7h-9z" fill="none" stroke="#fff" /><path d="M7 5h6v4H7zM15 5.500h1v3h-1zM0 2h5v2.500L3.500 6v3.500h-2V6L0 4.500zM1 0h1v2H1zM3 0h1v2H3z" fill="#fff" /></svg>
        <span className="ml-[18px] w-2 text-[13px]">ع</span>
        <div className="ml-[14px] w-[66px] whitespace-nowrap text-center leading-[18px]">
          <div>6:55 PM</div>
          <div>10/11/2024</div>
        </div>
        <svg width="17" height="17" viewBox="0 0 17 17" className="ml-[11px] mr-6"><path d="M0 1h16v11H9l-3 4v-4H0z" fill="#fff" /><path d="M3 4.500h10M3 7h10M3 9.500h6" stroke="#2e2624" /><circle cx="13" cy="12.500" r="3.500" fill="#ddd" stroke="#2e2624" /></svg>
      </div>
    </div>
  );
}

function Watermark() {
  return (
    <div className="pointer-events-none absolute bottom-[14px] left-1/2 flex -translate-x-1/2 flex-col items-center font-bold text-[#b4b4b4] opacity-40">
      <span className="font-['DejaVu_Sans'] text-[46px] leading-[46px]">مستقل</span>
      <span className="font-['Liberation_Sans'] text-[27px] leading-[30px]">mostaql.com</span>
    </div>
  );
}

export default function App() {
  return (
    <div className="relative flex h-screen flex-col overflow-hidden bg-white font-['Noto_Sans','Open_Sans',sans-serif]">
      <TitleBar />
      <TabRow />
      <Ribbon />
      <FormulaBar />
      <Sheet />
      <SheetTabs />
      <StatusBar />
      <Taskbar />
      <Watermark />
    </div>
  );
}
